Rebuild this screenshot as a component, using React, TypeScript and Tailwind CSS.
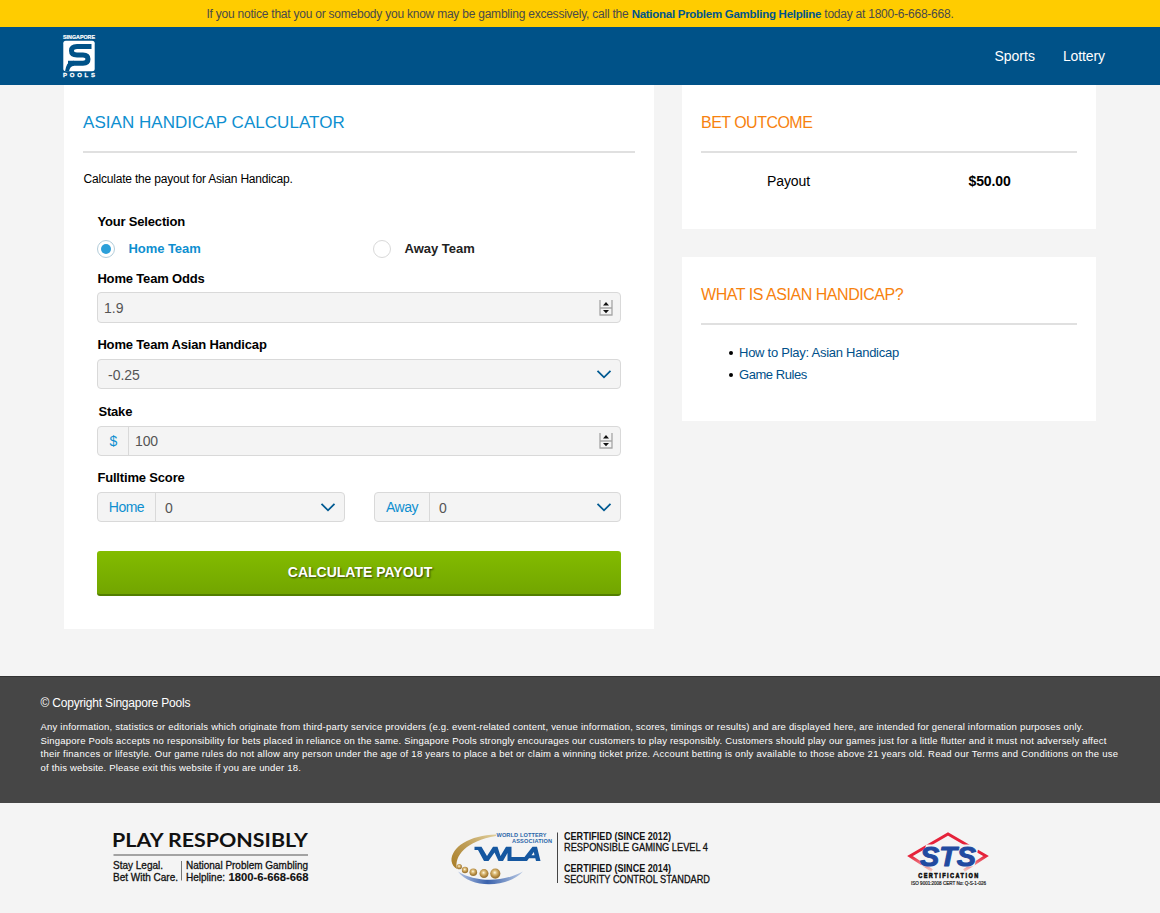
import { useState, type ReactNode } from "react";

function PoolsLogo() {
  return (
    <svg width="34" height="44" viewBox="0 0 34 44" role="img" aria-label="Singapore Pools" className="overflow-visible">
      <text x="1" y="5" fontSize="5.400" fontWeight="700" fill="#fff" stroke="#fff" strokeWidth="0.200" fontFamily="Liberation Sans, sans-serif" textLength="32" lengthAdjust="spacingAndGlyphs">SINGAPORE</text>
      <rect x="1.300" y="6.700" width="31.400" height="30.600" rx="2.500" fill="#fff" />
      <path d="M29.500 12.500H15q-5.500 0-5.500 4.200t5.500 4.200H21q5 0 5 4.200t-5 4.200H6" fill="none" stroke="#005288" strokeWidth="5" />
      <path d="M3 37.500Q4.500 27 12 26.800V31.800Q8 32 7 37.500Z" fill="#005288" />
      <text x="1" y="43" fontSize="6" fontWeight="700" fill="#fff" stroke="#fff" strokeWidth="0.300" fontFamily="Liberation Sans, sans-serif" textLength="32">POOLS</text>
    </svg>
  );
}

function Chevron() {
  return (
    <svg width="16" height="10" viewBox="0 0 16 10" className="shrink-0">
      <path d="M1.500 1.800L8 8.300L14.500 1.800" fill="none" stroke="#005a92" strokeWidth="1.800" />
    </svg>
  );
}

function Stepper() {
  return (
    <svg width="14" height="16" viewBox="0 0 14 16" className="shrink-0">
      <path d="M1 0V15.500M13 0V15.500M0.500 8H13.500M0.500 15H13.500" stroke="#a6a6a6" strokeWidth="1.300" fill="none" />
      <path d="M4 5.500L7 2L10 5.500ZM4 10L7 13.300L10 10Z" fill="#111" />
    </svg>
  );
}

function Radio({ checked, label, onSelect }: { checked: boolean; label: string; onSelect: () => void }) {
  return (
    <button type="button" role="radio" aria-checked={checked} onClick={onSelect} className="flex h-[18px] w-[276px] shrink-0 items-center">
      <span className={checked ? "flex size-[18px] items-center justify-center rounded-full border border-[#b3cdda]" : "flex size-[18px] items-center justify-center rounded-full border border-[#d9d9d9]"}>
        {checked && <span className="size-[10px] rounded-full bg-[#2b9fd9]" />}
      </span>
      <span className={checked ? "ml-[13.500px] text-[13px] font-bold tracking-[-0.060px] text-[#0e8fd0]" : "ml-[13.500px] text-[13px] font-bold text-[#222]"}>{label}</span>
    </button>
  );
}

function Label({ children }: { children: ReactNode }) {
  return <div className="h-[16px] pl-[0.400px] text-[13px] leading-[16px] font-bold tracking-[-0.170px] whitespace-nowrap text-black">{children}</div>;
}

function Title({ children, className }: { children: ReactNode; className: string }) {
  return <h2 className={"flex h-[68px] items-center border-b-2 border-[#e0e0e0] pt-[9px] whitespace-nowrap " + className}>{children}</h2>;
}

function PlayResponsibly() {
  return (
    <svg width="210" height="54" viewBox="0 0 210 54" fill="#111" fontFamily="Liberation Sans, sans-serif" className="overflow-visible">
      <text x="0" y="15.200" fontSize="18.800" fontWeight="700" fontFamily="Lato, sans-serif" textLength="196" lengthAdjust="spacingAndGlyphs">PLAY RESPONSIBLY</text>
      <path d="M1.500 23H196" stroke="#888" strokeWidth="1.500" />
      <g fontSize="10.400" stroke="#111" strokeWidth="0.300">
        <text x="1" y="36.900" textLength="50" lengthAdjust="spacingAndGlyphs">Stay Legal.</text>
        <text x="1" y="48.600" textLength="65" lengthAdjust="spacingAndGlyphs">Bet With Care.</text>
        <text x="74" y="36.900" textLength="122" lengthAdjust="spacingAndGlyphs">National Problem Gambling</text>
        <text x="74" y="48.600" textLength="39" lengthAdjust="spacingAndGlyphs">Helpline:</text>
        <text x="116.500" y="48.600" fontWeight="700" strokeWidth="0.100" textLength="80" lengthAdjust="spacingAndGlyphs">1800-6-668-668</text>
      </g>
      <path d="M69.500 29V48.500" stroke="#777" />
    </svg>
  );
}

function WlaLogo() {
  const balls = [
    [9.3, 34.7, 2.6],
    [15, 38, 3.2],
    [23.3, 40.2, 3.8],
    [34, 41.6, 4.5],
    [45.3, 41.6, 5.1],
  ];
  return (
    <svg width="290" height="54" viewBox="0 0 290 54" fontFamily="Liberation Sans, sans-serif" className="overflow-visible">
      <defs>
        <linearGradient id="gold" x1="0" y1="1" x2="1" y2="0">
          <stop offset="0" stopColor="#a77b24" />
          <stop offset="0.550" stopColor="#c0a05a" />
          <stop offset="1" stopColor="#e0cf9d" />
        </linearGradient>
        <linearGradient id="blue" x1="0" x2="1">
          <stop offset="0" stopColor="#b4c4e4" />
          <stop offset="0.450" stopColor="#3a62ac" />
          <stop offset="1" stopColor="#b9c9e4" />
        </linearGradient>
        <radialGradient id="ball" cx="0.450" cy="0.400">
          <stop offset="0" stopColor="#fffbe9" />
          <stop offset="0.350" stopColor="#e0c282" />
          <stop offset="0.750" stopColor="#bc934a" />
          <stop offset="1" stopColor="#a07a38" />
        </radialGradient>
      </defs>
      <path d="M46 2.500C20 3 1 15 1.500 29C2 32.500 4 35.500 7 37C4 24 16 9 46 4Z" fill="url(#gold)" />
      <path d="M8 39.500C20 56.500 57 56.500 73 39.500C54 50 26 51 8 39.500Z" fill="url(#blue)" />
      {balls.map(([x, y, r]) => (
        <circle key={x} cx={x} cy={y} r={r} fill="url(#ball)" />
      ))}
      <g fill="#2a66a8" fontWeight="700" fontSize="5.600">
        <text x="46.500" y="5" textLength="50" lengthAdjust="spacing">WORLD LOTTERY</text>
        <text x="62" y="10.500" textLength="40" lengthAdjust="spacing">ASSOCIATION</text>
      </g>
      <path d="M24.500 14.700H31.500L37 24L43 14.700H47.500L50.500 24L56 14.700H61.500V25H74.500L82.500 14.700H87L90.500 29H86L85.300 26.300H79L77 29H57.500V21L53 29H48.500L44.500 20.500L38.500 29H34L28 18H24.500ZM81.500 23.300H84.500L83.800 20Z" fill="#1557a0" fillRule="evenodd" />
      <path d="M107.500 0.500V51" stroke="#444" />
      <g fill="#111" fontSize="10.400">
        <text x="114" y="8.200" fontWeight="700" textLength="107" lengthAdjust="spacingAndGlyphs">CERTIFIED (SINCE 2012)</text>
        <text x="114" y="18.600" stroke="#111" strokeWidth="0.300" textLength="144" lengthAdjust="spacingAndGlyphs">RESPONSIBLE GAMING LEVEL 4</text>
        <text x="114" y="39.600" fontWeight="700" textLength="107" lengthAdjust="spacingAndGlyphs">CERTIFIED (SINCE 2014)</text>
        <text x="114" y="50.500" stroke="#111" strokeWidth="0.300" textLength="146" lengthAdjust="spacingAndGlyphs">SECURITY CONTROL STANDARD</text>
      </g>
    </svg>
  );
}

function StsLogo() {
  return (
    <svg width="90" height="54" viewBox="0 0 90 54" fontFamily="Liberation Sans, sans-serif" className="overflow-visible">
      <defs>
        <linearGradient id="red" x1="0" y1="0" x2="0" y2="1">
          <stop offset="0.600" stopColor="#e5223a" />
          <stop offset="1" stopColor="#f4c3bd" />
        </linearGradient>
      </defs>
      <path d="M25 38.500L3 24L41 2L79 24L57 38.500" fill="none" stroke="url(#red)" strokeWidth="3" />
      <path d="M19 12.500H72L67.500 34.500H14Z" fill="#f4f4f4" />
      <text x="13" y="33.500" fontSize="27" fontWeight="700" fontStyle="italic" fill="#214aa0" stroke="#214aa0" strokeWidth="1" strokeLinejoin="round" textLength="56" lengthAdjust="spacingAndGlyphs">STS</text>
      <text x="15" y="45.700" transform="scale(0.750 1)" fontSize="7.400" fontWeight="700" fill="#111" stroke="#111" strokeWidth="0.600" textLength="80" lengthAdjust="spacing">CERTIFICATION</text>
      <text x="4" y="52.500" fontSize="5" fill="#222" stroke="#222" strokeWidth="0.200" textLength="75" lengthAdjust="spacingAndGlyphs">ISO 9001:2008  CERT No: Q-S-1-026</text>
    </svg>
  );
}

export default function App() {
  const [side, setSide] = useState<"home" | "away">("home");
  return (
    <div className="flex h-[913px] w-[1160px] flex-col overflow-hidden bg-[#f4f4f4] font-['Liberation_Sans',Arial,sans-serif] text-black">
      <div className="flex h-[27px] shrink-0 items-center justify-center bg-[#ffcc00] pt-px text-[12px] whitespace-nowrap text-[#4a4a4a]">
        <p className="tracking-[-0.230px]">
          If you notice that you or somebody you know may be gambling excessively, call the <a className="text-[11.500px] font-bold tracking-[-0.270px] text-[#00558c]">National Problem Gambling Helpline</a> today at 1800-6-668-668.
        </p>
      </div>
      <header className="flex h-[58px] shrink-0 items-center justify-between bg-[#005288] pr-[55px] pl-[62px] text-white">
        <PoolsLogo />
        <nav className="flex gap-[28px] text-[14px]">
          <a>Sports</a>
          <a className="tracking-[-0.100px]">Lottery</a>
        </nav>
      </header>

      <main className="flex h-[591px] shrink-0 items-start gap-[28px] pl-[64px]">
        <section className="h-[544px] w-[590px] bg-white px-[19px]">
          <Title className="w-[552px] text-[17px] tracking-[0.040px] text-[#0e8fd0]">ASIAN HANDICAP CALCULATOR</Title>
          <p className="mt-[18px] h-[16px] pl-[0.500px] text-[12px] leading-[16px] tracking-[-0.190px]">Calculate the payout for Asian Handicap.</p>
          <div className="ml-[14px] w-[524px] pt-[27px]">
            <Label>Your Selection</Label>
            <div className="mt-[10px] flex" role="radiogroup">
              <Radio label="Home Team" checked={side === "home"} onSelect={() => setSide("home")} />
              <Radio label="Away Team" checked={side === "away"} onSelect={() => setSide("away")} />
            </div>
            <div className="mt-[13px]"><Label>Home Team Odds</Label></div>
            <div className="mt-[5px] flex h-[31px] items-center justify-between rounded-[4px] border border-[#d9d9d9] bg-[#f4f4f4] pr-[7px] pl-[6px] text-[14px] text-[#555]">
              <span className="pt-px">1.9</span>
              <Stepper />
            </div>
            <div className="mt-[14px]"><Label>Home Team Asian Handicap</Label></div>
            <div className="mt-[6px] flex h-[30px] items-center justify-between rounded-[4px] border border-[#d9d9d9] bg-[#f4f4f4] pr-[8px] pl-[10px] text-[14px] text-[#555]">
              <span className="pt-[2px]">-0.25</span>
              <Chevron />
            </div>
            <div className="mt-[15px] pl-px"><Label>Stake</Label></div>
            <div className="mt-[6px] flex h-[30px] items-center rounded-[4px] border border-[#d9d9d9] bg-[#f4f4f4] pr-[7px] text-[14px] text-[#555]">
              <span className="flex h-full w-[31px] items-center justify-center border-r border-[#d9d9d9] pt-px pl-px text-[14px] text-[#0e8fd0]">$</span>
              <span className="flex-1 pl-[6px] tracking-[-0.100px]">100</span>
              <Stepper />
            </div>
            <div className="mt-[14px]"><Label>Fulltime Score</Label></div>
            <div className="mt-[6px] flex justify-between">
              <div className="flex h-[30px] w-[248px] items-center rounded-[4px] border border-[#d9d9d9] bg-[#f4f4f4] pr-[8px] text-[14px] text-[#555]">
                <span className="flex h-full w-[58px] items-center justify-center border-r border-[#d9d9d9] tracking-[-0.500px] text-[#0e8fd0]">Home</span>
                <span className="flex-1 pt-[2px] pl-[9px]">0</span>
                <Chevron />
              </div>
              <div className="flex h-[30px] w-[247px] items-center rounded-[4px] border border-[#d9d9d9] bg-[#f4f4f4] pr-[8px] text-[14px] text-[#555]">
                <span className="flex h-full w-[55px] items-center justify-center border-r border-[#d9d9d9] tracking-[-0.500px] text-[#0e8fd0]">Away</span>
                <span className="flex-1 pt-[2px] pl-[9px]">0</span>
                <Chevron />
              </div>
            </div>
            <button type="button" className="mt-[29px] flex h-[45px] w-full items-center justify-center rounded-[3px] border-b-2 border-[#527e00] bg-linear-to-b from-[#83bc00] to-[#72a500] pl-[2px] text-[14px] font-bold text-white [text-shadow:1px_1px_2px_rgba(0,0,0,0.600)]">
              CALCULATE PAYOUT
            </button>
          </div>
        </section>

        <aside className="flex w-[414px] flex-col gap-[28px]">
          <section className="h-[144px] bg-white px-[19px]">
            <Title className="text-[16px] tracking-[-0.520px] text-[#f7820e]">BET OUTCOME</Title>
            <div className="mt-[19px] flex text-[14px] leading-[18px]">
              <span className="w-[201px] pl-[66px] tracking-[-0.100px]">Payout</span>
              <span className="pl-[66.500px] font-bold tracking-[-0.100px]">$50.00</span>
            </div>
          </section>
          <section className="h-[164px] bg-white px-[19px]">
            <Title className="text-[16px] tracking-[-0.460px] text-[#f7820e]">WHAT IS ASIAN HANDICAP?</Title>
            <ul className="mt-[17px] pl-[28px] text-[13px] leading-[22px] tracking-[-0.260px] text-[#00508a]">
              <li className="flex items-center gap-[6px]"><span className="size-[4px] rounded-full bg-black" />How to Play: Asian Handicap</li>
              <li className="flex items-center gap-[6px] tracking-[-0.450px]"><span className="size-[4px] rounded-full bg-black" />Game Rules</li>
            </ul>
          </section>
        </aside>
      </main>

      <footer className="h-[127px] shrink-0 border-t border-[#333] bg-[#464646] pl-[40.500px] whitespace-nowrap text-white">
        <p className="mt-[18px] h-[16px] text-[12px] leading-[16px] tracking-[-0.190px]">© Copyright Singapore Pools</p>
        <div className="mt-[9px] text-[9.500px] leading-[13.600px]">
          <p className="tracking-[0.204px]">Any information, statistics or editorials which originate from third-party service providers (e.g. event-related content, venue information, scores, timings or results) and are displayed here, are intended for general information purposes only.</p>
          <p className="tracking-[0.202px]">Singapore Pools accepts no responsibility for bets placed in reliance on the same. Singapore Pools strongly encourages our customers to play responsibly. Customers should play our games just for a little flutter and it must not adversely affect</p>
          <p className="tracking-[0.244px]">their finances or lifestyle. Our game rules do not allow any person under the age of 18 years to place a bet or claim a winning ticket prize. Account betting is only available to those above 21 years old. Read our Terms and Conditions on the use</p>
          <p className="tracking-[0.190px]">of this website. Please exit this website if you are under 18.</p>
        </div>
      </footer>
      <div className="flex items-start pt-[29px] pl-[112px]">
        <PlayResponsibly />
        <div className="ml-[128px]"><WlaLogo /></div>
        <div className="ml-[167px]"><StsLogo /></div>
      </div>
    </div>
  );
}
